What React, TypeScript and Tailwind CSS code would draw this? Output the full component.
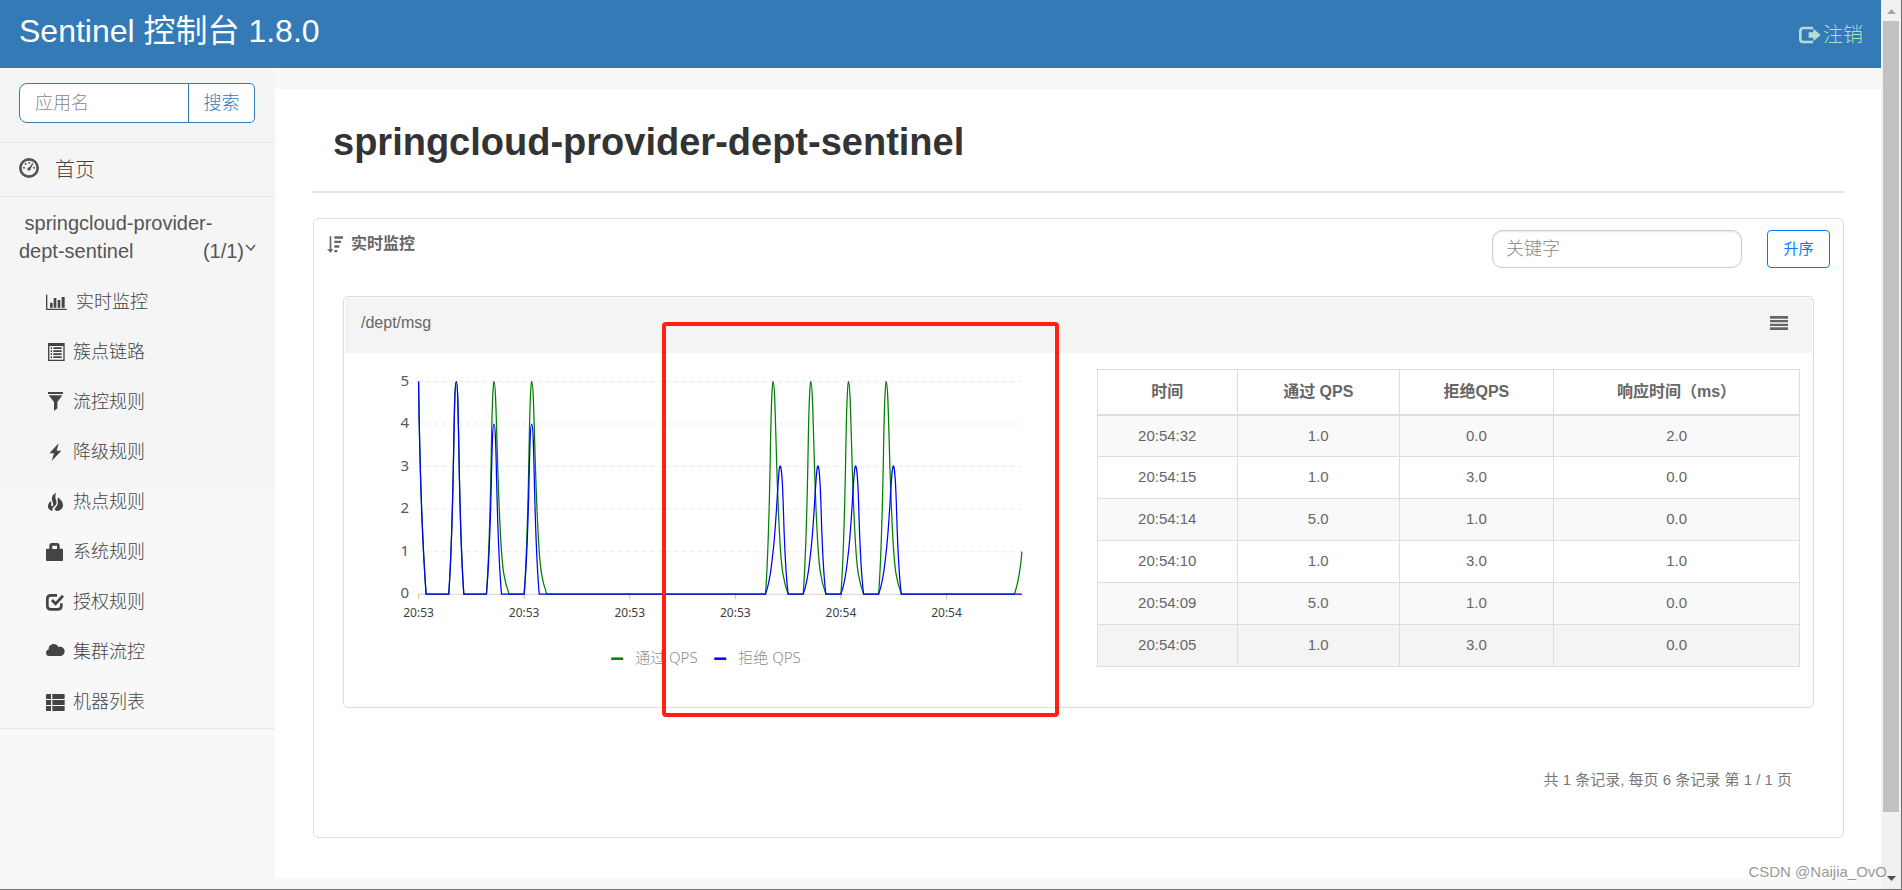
import { useState } from 'react';
import type { ReactNode } from 'react';
import { clsx, type ClassValue } from 'clsx';
import { twMerge } from 'tailwind-merge';

function cn(...inputs: ClassValue[]) {
  return twMerge(clsx(inputs));
}

type IconProps = { children: ReactNode; className?: string; viewBox?: string };

function Icon({ children, className, viewBox = '0 0 54 54' }: IconProps) {
  return (
    <svg
      viewBox={viewBox}
      fill="currentColor"
      aria-hidden="true"
      className={cn('w-[18px] h-[18px] shrink-0 overflow-visible', className)}
    >
      {children}
    </svg>
  );
}

const menuItems = [
  {
    name: '实时监控',
    icon: (
      <Icon viewBox="0 0 63 54" className="w-[21px]">
        <path d="M0 5h4v42h58v4H0z" />
        <path d="M12 29h8v15h-8zM23 15h8v29h-8zM35 21h8v23h-8zM47 12h9v32h-9z" />
      </Icon>
    ),
  },
  {
    name: '簇点链路',
    icon: (
      <Icon>
        <path fillRule="evenodd" d="M6 0h50v54H6zM10 9v41h42V9z" />
        <path d="M14 13h4v5h-4zM22 13h25v5H22zM14 22h4v5h-4zM22 22h25v5H22zM14 31h4v5h-4zM22 31h25v5H22zM14 40h4v5h-4zM22 40h25v5H22z" />
      </Icon>
    ),
  },
  {
    name: '流控规则',
    icon: (
      <Icon>
        <path d="M6 -3h45v6H6zM8 7h41L34 27v19l-10 8V27z" />
      </Icon>
    ),
  },
  {
    name: '降级规则',
    icon: (
      <Icon>
        <path d="M38 1L10 31h14l-7 23 29-31H32z" />
      </Icon>
    ),
  },
  {
    name: '热点规则',
    icon: (
      <Icon>
        <path d="M30 -1C19 5 15 14 19 24c2 7 4 12 1 15-3 2-6-1-4-7 0-3 0-5-2-7C9 29 5 35 6 42c1 7 8 11 14 12-3-5 0-10 6-15s7-11 4-17C28 17 27 8 30 -1z" />
        <path d="M36 13C44 20 52 28 51 38 50 47 42 53 33 54 27 53 24 49 28 44 34 38 37 32 35 24 34 20 35 16 36 13z" />
      </Icon>
    ),
  },
  {
    name: '系统规则',
    icon: (
      <Icon>
        <path
          fillRule="evenodd"
          d="M3 17h7V7c0-4 3-7 7-7h17c4 0 7 3 7 7v10h7c2 0 3 1 3 3v31c0 2-1 3-3 3H3c-2 0-3-1-3-3V20c0-2 1-3 3-3zM19 8v10h14V8z"
        />
      </Icon>
    ),
  },
  {
    name: '授权规则',
    icon: (
      <Icon>
        <path
          d="M33 7H15C8 7 4 11 4 18v20c0 7 4 11 11 11h20c7 0 11-4 11-11v-7"
          fill="none"
          stroke="currentColor"
          strokeWidth="8"
        />
        <path d="M15 24l6-6 8 8L48 5l6 6-25 27z" />
      </Icon>
    ),
  },
  {
    name: '集群流控',
    icon: (
      <Icon>
        <path d="M9 39C4 39 0 35 0 29c0-5 4-9 8-10C7 10 14 3 23 3c7 0 12 3 14 9 10-3 19 4 19 13 0 8-5 14-12 14z" />
      </Icon>
    ),
  },
  {
    name: '机器列表',
    icon: (
      <Icon>
        <path d="M2 3h13v15H2L0 16V5zM19 3h35l2 2v11l-2 2H19zM0 21h15v15H0zM19 21h37v15H19zM0 39h15v15H2l-2-2zM19 39h37v13l-2 2H19z" />
      </Icon>
    ),
  },
];

const rows = [
  ['20:54:32', '1.0', '0.0', '2.0'],
  ['20:54:15', '1.0', '3.0', '0.0'],
  ['20:54:14', '5.0', '1.0', '0.0'],
  ['20:54:10', '1.0', '3.0', '1.0'],
  ['20:54:09', '5.0', '1.0', '0.0'],
  ['20:54:05', '1.0', '3.0', '0.0'],
];

// One sample per second, seconds that are not listed are 0
const passQps: Record<number, number> = {
  0: 5, 5: 5, 10: 5, 11: 1, 15: 5, 16: 1,
  47: 5, 48: 1, 52: 5, 53: 1, 57: 5, 58: 1, 62: 5, 63: 1, 80: 1,
};
const blockQps: Record<number, number> = {
  0: 5, 5: 5, 10: 4, 15: 4,
  47: 1, 48: 3, 52: 1, 53: 3, 57: 1, 58: 3, 62: 1, 63: 3,
};

const SAMPLES = 81;
const LEFT = 74.5;
const RIGHT = 677.5;
const BOTTOM = 241;
const UNIT = 42.5;
const STEP = (RIGHT - LEFT) / (SAMPLES - 1);

// Catmull-Rom smoothing, control points are kept inside the series' own bounds
function smoothPath(series: Record<number, number>) {
  const pts = Array.from({ length: SAMPLES }, (_, i) => [LEFT + i * STEP, BOTTOM - (series[i] ?? 0) * UNIT]);
  const top = Math.min(...pts.map((p) => p[1]));
  const clamp = (y: number) => Math.max(top, Math.min(BOTTOM, y));

  const controls = pts.map((p, i) => {
    const prev = pts[i - 1];
    const next = pts[i + 1];
    if (!prev || !next) return [p, p];
    const vx = (next[0] - prev[0]) * 0.4;
    const vy = (next[1] - prev[1]) * 0.4;
    const d0 = Math.hypot(p[0] - prev[0], p[1] - prev[1]);
    const d1 = Math.hypot(p[0] - next[0], p[1] - next[1]);
    const a = d0 / (d0 + d1);
    const b = d1 / (d0 + d1);
    return [
      [p[0] - vx * a, clamp(p[1] - vy * a)],
      [p[0] + vx * b, clamp(p[1] + vy * b)],
    ];
  });

  return pts
    .map((p, i) => {
      if (i === 0) return `M${p[0]} ${p[1]}`;
      const c1 = controls[i - 1][1];
      const c2 = controls[i][0];
      return `C${c1[0]} ${c1[1]} ${c2[0]} ${c2[1]} ${p[0]} ${p[1]}`;
    })
    .join('');
}

function QpsChart() {
  const timeLabels = ['20:53', '20:53', '20:53', '20:53', '20:54', '20:54'];

  return (
    <svg viewBox="0 0 734 354" className="block w-full font-['Noto_Sans','Noto_Sans_CJK_SC',sans-serif]">
      {[0, 1, 2, 3, 4, 5].map((n) => (
        <g key={n}>
          {n > 0 && (
            <line
              x1={LEFT}
              x2={RIGHT}
              y1={BOTTOM - n * UNIT}
              y2={BOTTOM - n * UNIT}
              stroke="#e8e8e8"
              strokeDasharray="4 4"
            />
          )}
          <text x="65" y={BOTTOM - n * UNIT + 4} textAnchor="end" fill="#595959" className="text-[15px]">
            {n}
          </text>
        </g>
      ))}
      <line x1={LEFT} x2={RIGHT} y1={BOTTOM} y2={BOTTOM} stroke="#d0d0d0" />
      {timeLabels.map((label, i) => (
        <g key={i}>
          <line
            x1={LEFT + i * 14 * STEP}
            x2={LEFT + i * 14 * STEP}
            y1={BOTTOM}
            y2={BOTTOM + 5}
            stroke="#bfbfbf"
          />
          <text
            x={LEFT + i * 14 * STEP}
            y="264"
            textAnchor="middle"
            fill="#404040"
            className="text-[12px]"
          >
            {label}
          </text>
        </g>
      ))}
      <path d={smoothPath(passQps)} fill="none" stroke="#008000" strokeWidth="1.25" />
      <path d={smoothPath(blockQps)} fill="none" stroke="#0000ff" strokeWidth="1.25" />
      <path d="M267 305.5h12" stroke="#008000" strokeWidth="2.5" />
      <text x="291" y="310" fill="#8c8c8c" className="text-[15px] font-light">
        通过 QPS
      </text>
      <path d="M370 305.5h12" stroke="#0000ff" strokeWidth="2.5" />
      <text x="394" y="310" fill="#8c8c8c" className="text-[15px] font-light">
        拒绝 QPS
      </text>
    </svg>
  );
}

function MetricTable() {
  return (
    <table className="w-full table-fixed border-collapse text-center text-[15px] text-[#666]">
      <thead>
        <tr className="h-[45px] text-[16px]">
          <th className="w-[20%] border border-b-2 border-[#ddd] font-bold">时间</th>
          <th className="w-[23%] border border-b-2 border-[#ddd] font-bold">通过 QPS</th>
          <th className="w-[22%] border border-b-2 border-[#ddd] font-bold">拒绝QPS</th>
          <th className="border border-b-2 border-[#ddd] font-bold">响应时间（ms）</th>
        </tr>
      </thead>
      <tbody>
        {rows.map((row) => (
          <tr key={row[0]} className="h-[42px] odd:bg-[#f9f9f9] last:bg-[#f4f4f4]">
            {row.map((cell, i) => (
              <td key={i} className="border border-[#ddd]">
                {cell}
              </td>
            ))}
          </tr>
        ))}
      </tbody>
    </table>
  );
}

function Sidebar() {
  const [app, setApp] = useState('');

  return (
    <aside className="w-[275px] shrink-0 font-light text-[#444] bg-[linear-gradient(#f5f5f5_421px,#f8f8f8_421px)]">
      <div className="flex pt-[15px] pb-[19px] px-[19px] border-b border-[#e7e7e7]">
        <input
          type="text"
          aria-label="应用名"
          placeholder="应用名"
          value={app}
          onChange={(e) => setApp(e.target.value)}
          className="h-10 w-[170px] px-[15px] text-[18px] bg-white border border-[#337ab7] rounded-l-[8px] placeholder:text-[#888] outline-none"
        />
        <button className="h-10 w-[67px] -ml-px text-[18px] text-[#337ab7] bg-white border border-[#337ab7] rounded-r-[5px]">
          搜索
        </button>
      </div>
      <a href="#" className="flex items-center h-[54px] px-[19px] gap-[16px] text-[20px] border-b border-[#e7e7e7]">
        <Icon viewBox="0 0 60 60" className="w-5 h-5 -mt-1 text-[#555]">
          <circle cx="30" cy="30" r="26" fill="none" stroke="currentColor" strokeWidth="8" />
          <circle cx="15" cy="29" r="3" />
          <circle cx="20" cy="18" r="3" />
          <circle cx="31" cy="14" r="3" />
          <circle cx="45" cy="29" r="3" />
          <circle cx="30" cy="33" r="5" />
          <path d="M40 15l3 2-9 17-5-3z" />
        </Icon>
        首页
      </a>
      <div className="pb-px border-b border-[#e7e7e7]">
        <a href="#" className="block py-[12px] px-[19px] text-[20px] leading-[28px] text-[#555]">
          &nbsp;springcloud-provider-
          <br />
          <span className="flex justify-between">
            dept-sentinel
            <span className="flex items-center gap-px">
              (1/1)
              <svg viewBox="0 0 11 7" className="w-[11px] h-[7px] mb-[8px]" fill="none" stroke="currentColor">
                <path d="M1 1l5 5 4-5" strokeWidth="1.5" />
              </svg>
            </span>
          </span>
        </a>
        <ul>
          {menuItems.map((item) => (
            <li key={item.name}>
              <a href="#" className="flex items-center gap-[9px] h-[50px] pl-[46px] text-[18px]">
                {item.icon}
                {item.name}
              </a>
            </li>
          ))}
        </ul>
      </div>
    </aside>
  );
}

function Header() {
  return (
    <header className="flex justify-between h-[68px] pl-[19px] pr-[18px] bg-[#337ab7]">
      <a href="#" className="text-[32px] leading-[62px] text-white">
        Sentinel 控制台 1.8.0
      </a>
      <a href="#" className="flex items-center gap-[2px] pt-[2px] text-[20px] font-light text-[#b2dfcf]">
        <Icon viewBox="0 0 66 54" className="w-[22px]">
          <path
            d="M42 6H14C8 6 4 10 4 16v22c0 6 4 10 10 10h28"
            fill="none"
            stroke="currentColor"
            strokeWidth="8"
          />
          <path d="M29 19h14V8l22 19-22 19V35H29z" />
        </Icon>
        注销
      </a>
    </header>
  );
}

function ScrollBar() {
  return (
    <div aria-hidden="true" className="flex flex-col w-5 shrink-0 px-[2px] bg-[#f1f1f1]">
      <svg viewBox="0 0 16 21" className="w-4 h-[21px]">
        <path d="M4 14h9L8.500 9z" fill="#a3a3a3" />
      </svg>
      <div className="flex-[791] w-full bg-[#c1c1c1]" />
      <div className="flex-[56]" />
      <svg viewBox="0 0 16 21" className="w-4 h-[21px]">
        <path d="M4 8h9l-4.500 5z" fill="#505050" />
      </svg>
    </div>
  );
}

export default function App() {
  const [keyword, setKeyword] = useState('');

  return (
    <div className="relative flex min-h-screen bg-[#f8f8f8] border-r border-b border-[#6f6f6f] font-['Liberation_Sans','Noto_Sans_CJK_SC',sans-serif]">
      <div className="flex flex-col flex-1 min-w-0">
        <Header />
        <div className="flex flex-1">
          <Sidebar />
          <main className="flex-1 min-w-0 mt-[21px] mb-[11px] pl-[38px] pr-[37px] pt-[33px] bg-white">
            <h1 className="pl-5 pb-[28px] text-[38px] leading-[41px] font-bold text-[#333] border-b-2 border-[#e4e4e4]">
              springcloud-provider-dept-sentinel
            </h1>

            <section className="mt-[25px] border border-[#ddd] rounded-[5px]">
              <div className="flex items-start pt-[11px] px-[13px] text-[#666]">
                <h2 className="flex items-center gap-2 text-[16px] leading-[28px] font-bold">
                  <Icon viewBox="0 0 48 51" className="w-4 h-[17px]">
                    <path d="M8 1h5v39h6L11 50 0 40h8z" />
                    <path d="M22 1h26v7H22zM22 14h20v7H22zM22 28h15v7H22zM22 42h9v7h-9z" />
                  </Icon>
                  实时监控
                </h2>
                <input
                  type="text"
                  aria-label="关键字"
                  placeholder="关键字"
                  value={keyword}
                  onChange={(e) => setKeyword(e.target.value)}
                  className="ml-auto mr-[25px] w-[250px] h-[38px] px-[13px] text-[18px] font-light bg-white border border-[#ccc] rounded-[10px] shadow-[inset_0_1px_2px_rgba(0,0,0,0.1)] placeholder:text-[#888] outline-none"
                />
                <button className="w-[63px] h-[38px] text-[15px] text-[#007bff] bg-white border border-[#007bff] rounded-[4px]">
                  升序
                </button>
              </div>

              <div className="relative mt-[28px] mx-[29px] border border-[#ddd] rounded-[5px]">
                <div className="flex items-center justify-between h-[55px] mt-px mx-px pl-4 pr-[24px] pb-[5px] bg-[#f4f4f4] text-[16px] text-[#666]">
                  /dept/msg
                  <button aria-label="菜单">
                    <svg viewBox="0 0 54 42" className="block w-[18px] h-[14px]" fill="currentColor">
                      <path d="M0 0h54v8H0zM0 12h54v7H0zM0 23h54v7H0zM0 34h54v8H0z" />
                    </svg>
                  </button>
                </div>
                <div className="flex">
                  <div className="w-1/2">
                    <QpsChart />
                  </div>
                  <div className="w-1/2 pt-4 pl-[18px] pr-[13px]">
                    <MetricTable />
                  </div>
                </div>
                {/* highlighted time range */}
                <div className="absolute left-[318px] top-[25px] w-[397px] h-[395px] border-4 border-[#ff2011] rounded-[4px]" />
              </div>

              <p className="mt-[60px] mb-[45px] pr-[51px] text-right text-[15px] leading-[24px] text-[#777]">
                共 1 条记录, 每页 6 条记录 第 1 / 1 页
              </p>
            </section>
          </main>
        </div>
      </div>
      <ScrollBar />
      <span className="absolute right-[14px] bottom-[7px] text-[15px] leading-[20px] text-[#999] [text-shadow:1px_1px_1px_#fff]">
        CSDN @Naijia_OvO
      </span>
    </div>
  );
}
